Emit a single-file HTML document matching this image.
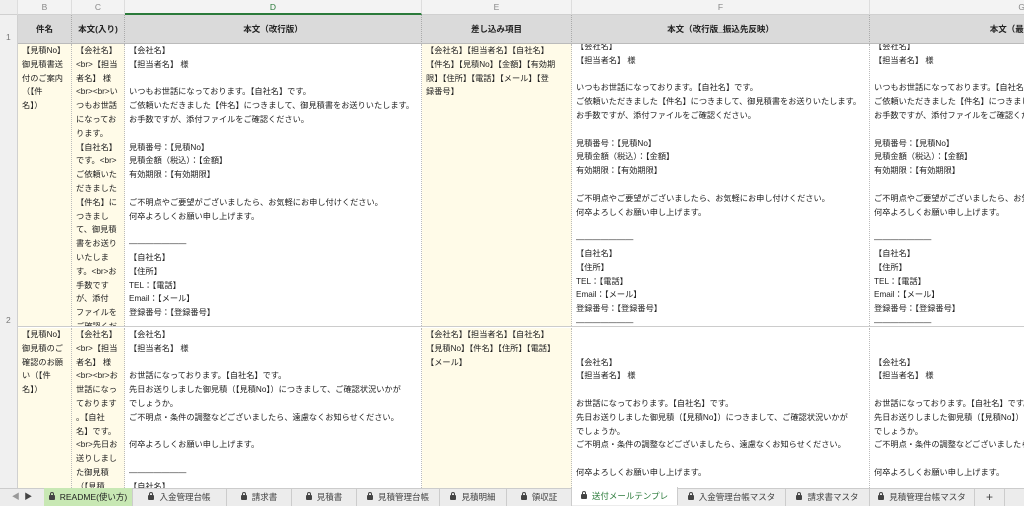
<!DOCTYPE html><html><head><meta charset="utf-8"><style>
*{margin:0;padding:0;box-sizing:border-box}
body{width:1024px;height:506px;overflow:hidden;background:#fff;position:relative;font-family:"Liberation Sans","Noto Sans CJK JP",sans-serif;color:#222}
.a{position:absolute;overflow:hidden}
.t{font-size:8.2px;line-height:13.8px;white-space:pre;padding-left:4px}
.y{background:#fffbe8}
.h{background:#dadada;font-weight:bold;font-size:8.5px;text-align:center;line-height:29px;top:15px;height:29px;border-right:1px dotted #aaa;border-bottom:1px solid #bbb}
.L{top:0;height:15px;background:#f3f3f3;color:#888;font-size:8.5px;text-align:center;line-height:15px;border-right:1px solid #ddd;border-bottom:1px solid #d0d0d0}
.v{border-right:1px dotted #bbb}
.tab{position:absolute;top:488px;height:18px;font-size:8.5px;line-height:18px;color:#444;border-right:1px solid #ccc;text-align:center}
.lk{display:inline-block;width:6px;height:5px;background:#444;border-radius:1px;margin-right:5px;position:relative;top:0px}
.lk:before{content:"";position:absolute;left:1px;top:-3px;width:2px;height:3px;border:1px solid #444;border-bottom:none;border-radius:2px 2px 0 0}
</style></head><body>
<div class="a L" style="left:0;width:18px;background:#eee"></div>
<div class="a L" style="left:18px;width:54px">B</div>
<div class="a L" style="left:72px;width:53px">C</div>
<div class="a L" style="left:125px;width:297px;color:#2a7a3a;border-bottom:2px solid #2a7a3a">D</div>
<div class="a L" style="left:422px;width:150px">E</div>
<div class="a L" style="left:572px;width:298px">F</div>
<div class="a L" style="left:870px;width:160px;text-align:right;padding-right:4px">G</div>
<div class="a" style="left:0;top:15px;width:18px;height:473px;background:#f0f0f0;border-right:1px solid #d0d0d0;font-size:8.5px;color:#777"><div style="position:absolute;top:17px;left:6px">1</div><div style="position:absolute;top:300px;left:6px">2</div></div>
<div class="a h" style="left:18px;width:54px">件名</div>
<div class="a h" style="left:72px;width:53px">本文(入り)</div>
<div class="a h" style="left:125px;width:297px">本文（改行版）</div>
<div class="a h" style="left:422px;width:150px">差し込み項目</div>
<div class="a h" style="left:572px;width:298px">本文（改行版_振込先反映）</div>
<div class="a h" style="left:870px;width:300px">本文（最終版）</div>

<div class="a t y v" style="left:18px;top:44px;width:54px;height:282px;padding-top:0">【見積No】
御見積書送
付のご案内
（【件
名】）</div>
<div class="a t y v" style="left:72px;top:44px;width:53px;height:282px">【会社名】
&lt;br&gt;【担当
者名】 様
&lt;br&gt;&lt;br&gt;い
つもお世話
になってお
ります。
【自社名】
です。&lt;br&gt;
ご依頼いた
だきました
【件名】に
つきまし
て、御見積
書をお送り
いたしま
す。&lt;br&gt;お
手数です
が、添付
ファイルを
ご確認くだ</div>
<div class="a t v" style="left:125px;top:44px;width:297px;height:282px">【会社名】
【担当者名】 様

いつもお世話になっております。【自社名】です。
ご依頼いただきました【件名】につきまして、御見積書をお送りいたします。
お手数ですが、添付ファイルをご確認ください。

見積番号：【見積No】
見積金額（税込）：【金額】
有効期限：【有効期限】

ご不明点やご要望がございましたら、お気軽にお申し付けください。
何卒よろしくお願い申し上げます。

―――――――
【自社名】
【住所】
TEL：【電話】
Email：【メール】
登録番号：【登録番号】
―――――――</div>
<div class="a t y v" style="left:422px;top:44px;width:150px;height:282px">【会社名】【担当者名】【自社名】
【件名】【見積No】【金額】【有効期
限】【住所】【電話】【メール】【登
録番号】</div>
<div class="a v" style="left:572px;top:44px;width:298px;height:282px"><div class="t" style="margin-top:-4px">【会社名】
【担当者名】 様

いつもお世話になっております。【自社名】です。
ご依頼いただきました【件名】につきまして、御見積書をお送りいたします。
お手数ですが、添付ファイルをご確認ください。

見積番号：【見積No】
見積金額（税込）：【金額】
有効期限：【有効期限】

ご不明点やご要望がございましたら、お気軽にお申し付けください。
何卒よろしくお願い申し上げます。

―――――――
【自社名】
【住所】
TEL：【電話】
Email：【メール】
登録番号：【登録番号】
―――――――</div></div>
<div class="a" style="left:870px;top:44px;width:160px;height:282px"><div class="t" style="margin-top:-4px">【会社名】
【担当者名】 様

いつもお世話になっております。【自社名】です。
ご依頼いただきました【件名】につきまして、御見積書をお送りいたします。
お手数ですが、添付ファイルをご確認ください。

見積番号：【見積No】
見積金額（税込）：【金額】
有効期限：【有効期限】

ご不明点やご要望がございましたら、お気軽にお申し付けください。
何卒よろしくお願い申し上げます。

―――――――
【自社名】
【住所】
TEL：【電話】
Email：【メール】
登録番号：【登録番号】
―――――――</div></div>
<div class="a" style="left:18px;top:326px;width:1006px;height:1px;background:#ccc"></div>

<div class="a t y v" style="left:18px;top:328px;width:54px;height:160px">【見積No】
御見積のご
確認のお願
い（【件
名】）</div>
<div class="a t y v" style="left:72px;top:328px;width:53px;height:160px">【会社名】
&lt;br&gt;【担当
者名】 様
&lt;br&gt;&lt;br&gt;お
世話になっ
ております
。【自社
名】です。
&lt;br&gt;先日お
送りしまし
た御見積
（【見積</div>
<div class="a t v" style="left:125px;top:328px;width:297px;height:160px">【会社名】
【担当者名】 様

お世話になっております。【自社名】です。
先日お送りしました御見積（【見積No】）につきまして、ご確認状況いかが
でしょうか。
ご不明点・条件の調整などございましたら、遠慮なくお知らせください。

何卒よろしくお願い申し上げます。

―――――――
【自社名】</div>
<div class="a t y v" style="left:422px;top:328px;width:150px;height:160px">【会社名】【担当者名】【自社名】
【見積No】【件名】【住所】【電話】
【メール】</div>
<div class="a t v" style="left:572px;top:328px;width:298px;height:160px">

【会社名】
【担当者名】 様

お世話になっております。【自社名】です。
先日お送りしました御見積（【見積No】）につきまして、ご確認状況いかが
でしょうか。
ご不明点・条件の調整などございましたら、遠慮なくお知らせください。

何卒よろしくお願い申し上げます。</div>
<div class="a t" style="left:870px;top:328px;width:160px;height:160px">

【会社名】
【担当者名】 様

お世話になっております。【自社名】です。
先日お送りしました御見積（【見積No】）につきまして、ご確認状況いかが
でしょうか。
ご不明点・条件の調整などございましたら、遠慮なくお知らせください。

何卒よろしくお願い申し上げます。</div>

<div class="a" style="left:0;top:488px;width:1024px;height:18px;background:#ececec;border-top:1px solid #ccc"></div>
<div class="tab" style="left:0;width:44px;border:none;color:#999;font-size:8px">◀ &nbsp;<span style="color:#444">▶</span></div>
<div class="tab" style="left:44px;width:89px;background:#c8e8b4;color:#222"><span class="lk"></span>README(使い方)</div>
<div class="tab" style="left:133px;width:94px"><span class="lk"></span>入金管理台帳</div>
<div class="tab" style="left:227px;width:65px"><span class="lk"></span>請求書</div>
<div class="tab" style="left:292px;width:65px"><span class="lk"></span>見積書</div>
<div class="tab" style="left:357px;width:83px"><span class="lk"></span>見積管理台帳</div>
<div class="tab" style="left:440px;width:67px"><span class="lk"></span>見積明細</div>
<div class="tab" style="left:507px;width:65px"><span class="lk"></span>領収証</div>
<div class="tab" style="left:572px;width:106px;background:#fff;color:#2a7a3a;top:487px"><span class="lk"></span>送付メールテンプレ</div>
<div class="tab" style="left:678px;width:108px"><span class="lk"></span>入金管理台帳マスタ</div>
<div class="tab" style="left:786px;width:84px"><span class="lk"></span>請求書マスタ</div>
<div class="tab" style="left:870px;width:105px"><span class="lk"></span>見積管理台帳マスタ</div>
<div class="tab" style="left:975px;width:30px;font-size:12px">+</div>
</body></html>
